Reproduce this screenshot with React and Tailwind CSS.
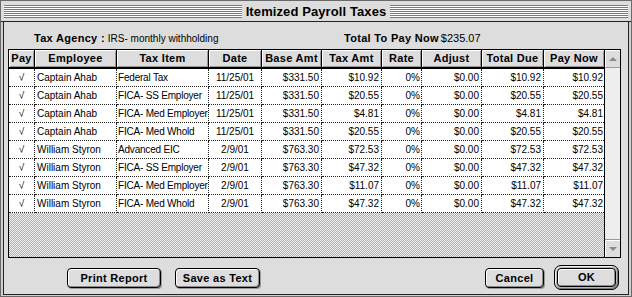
import React from "react";

const rows = [
  ["Captain Ahab", "Federal Tax", "11/25/01", "$331.50", "$10.92", "0%", "$0.00", "$10.92", "$10.92"],
  ["Captain Ahab", "FICA- SS Employer", "11/25/01", "$331.50", "$20.55", "0%", "$0.00", "$20.55", "$20.55"],
  ["Captain Ahab", "FICA- Med Employer", "11/25/01", "$331.50", "$4.81", "0%", "$0.00", "$4.81", "$4.81"],
  ["Captain Ahab", "FICA- Med Whold", "11/25/01", "$331.50", "$20.55", "0%", "$0.00", "$20.55", "$20.55"],
  ["William Styron", "Advanced EIC", "2/9/01", "$763.30", "$72.53", "0%", "$0.00", "$72.53", "$72.53"],
  ["William Styron", "FICA- SS Employer", "2/9/01", "$763.30", "$47.32", "0%", "$0.00", "$47.32", "$47.32"],
  ["William Styron", "FICA- Med Employer", "2/9/01", "$763.30", "$11.07", "0%", "$0.00", "$11.07", "$11.07"],
  ["William Styron", "FICA- Med Whold", "2/9/01", "$763.30", "$47.32", "0%", "$0.00", "$47.32", "$47.32"],
];

const headers = ["Pay", "Employee", "Tax Item", "Date", "Base Amt", "Tax Amt", "Rate", "Adjust", "Total Due", "Pay Now"];

const cellAlign = [
  "justify-center",
  "justify-start pl-[2px]",
  "justify-start pl-[1px] tracking-[-0.2px]",
  "justify-center",
  "justify-end pr-[2px]",
  "justify-end pr-[2px]",
  "justify-end pr-[1px]",
  "justify-end pr-[2px]",
  "justify-end pr-[2px]",
  "justify-end pr-[1px]",
];

function Btn({ children, w }) {
  return (
    <div
      className={`${w} h-[20px] rounded-[4px] border border-black bg-[#dddddd] flex items-center justify-center shadow-[inset_1px_1px_0_#ffffff,inset_-1px_-1px_0_#8a8a8a,1px_1px_0_#999999] text-[11px] font-bold tracking-[0.3px] text-black`}
    >
      {children}
    </div>
  );
}

export default function App() {
  const font = { fontFamily: '"Liberation Sans", Arial, sans-serif' };
  return (
    <div
      className="w-[632px] h-[297px] border border-[#6a6a6a] bg-[#cfcfcf] flex flex-col overflow-hidden text-black"
      style={font}
    >
      {/* Title bar */}
      <div className="h-[21px] shrink-0 border-b border-[#222222] bg-[#dddddd] px-[3px] flex items-center">
        <div className="flex-1 h-[13px] bg-[repeating-linear-gradient(to_bottom,#7a7a7a_0_1px,#ffffff_1px_2px)]" />
        <div className="px-[4px] text-[13px] font-bold leading-none tracking-[0.1px]">Itemized Payroll Taxes</div>
        <div className="flex-1 h-[13px] bg-[repeating-linear-gradient(to_bottom,#7a7a7a_0_1px,#ffffff_1px_2px)]" />
      </div>

      {/* Panel */}
      <div className="flex-1 mx-[2px] mb-[1px] border-l border-r border-b border-[#222222] bg-[#dddddd] flex flex-col">
        {/* Info line */}
        <div className="mt-[9px] h-[14px] pl-[30px] flex items-center text-[10px]">
          <div className="w-[310px] flex items-center">
            <span className="text-[11px] font-bold tracking-[0.3px]">Tax Agency :</span>
            <span className="ml-[3px]">IRS- monthly withholding</span>
          </div>
          <span className="text-[11px] font-bold tracking-[0.3px]">Total To Pay Now</span>
          <span className="ml-[2px] text-[11px]">$235.07</span>
        </div>

        {/* Table */}
        <div className="mt-[4px] ml-[4px] w-[613px] h-[209px] border border-black flex">
          <div className="w-[595px] flex flex-col">
            {/* Header */}
            <div className="grid grid-cols-[26px_82px_92px_53px_60px_60px_40px_60px_62px_60px] h-[19px] border-b-2 border-black">
              {headers.map((h, i) => (
                <div
                  key={h}
                  className={`${i < 9 ? "border-r border-black" : ""} bg-[#dddddd] shadow-[inset_1px_1px_0_#ffffff,inset_-1px_-1px_0_#999999] flex items-center justify-center text-[11px] font-bold tracking-[0.3px] whitespace-nowrap overflow-hidden`}
                >
                  {h}
                </div>
              ))}
            </div>
            {/* Rows */}
            <div className="bg-white">
              {rows.map((r, ri) => (
                <div
                  key={ri}
                  className="grid grid-cols-[26px_82px_92px_53px_60px_60px_40px_60px_62px_60px] h-[18px]"
                >
                  {["√", ...r].map((c, ci) => (
                    <div
                      key={ci}
                      className={`${ci < 9 ? "border-r" : ""} border-b border-dotted border-[#222222] flex items-center ${cellAlign[ci]} text-[10px] whitespace-nowrap overflow-hidden`}
                    >
                      {c}
                    </div>
                  ))}
                </div>
              ))}
            </div>
            <div className="flex-1 bg-[repeating-conic-gradient(#b0b0b0_0_25%,#efefef_0_50%)] bg-[length:2px_2px]" />
          </div>
          {/* Scrollbar */}
          <div className="w-[16px] border-l border-black bg-[#eeeeee] flex flex-col justify-between">
            <div className="h-[18px] border-b border-[#9a9a9a] bg-[#dddddd] shadow-[inset_1px_1px_0_#ffffff] flex items-center justify-center">
              <div className="w-0 h-0 border-l-[4px] border-r-[4px] border-b-[4px] border-l-transparent border-r-transparent border-b-[#8a8a8a]" />
            </div>
            <div className="h-[18px] border-t border-[#9a9a9a] bg-[#dddddd] shadow-[inset_1px_1px_0_#ffffff] flex items-center justify-center">
              <div className="w-0 h-0 border-l-[4px] border-r-[4px] border-t-[4px] border-l-transparent border-r-transparent border-t-[#8a8a8a]" />
            </div>
          </div>
        </div>

        {/* Buttons */}
        <div className="mt-[7px] h-[25px] flex items-start">
          <div className="mt-[3px] ml-[63px]">
            <Btn w="w-[94px]">Print Report</Btn>
          </div>
          <div className="mt-[3px] ml-[14px]">
            <Btn w="w-[85px]">Save as Text</Btn>
          </div>
          <div className="mt-[3px] ml-[225px]">
            <Btn w="w-[59px]">Cancel</Btn>
          </div>
          <div className="ml-[10px] w-[65px] h-[25px] rounded-[7px] border border-black bg-[#b8b8b8] shadow-[inset_1px_1px_0_#eeeeee,inset_-1px_-1px_0_#777777] p-[2px]">
            <div className="w-full h-full rounded-[4px] border border-black bg-[#dddddd] shadow-[inset_1px_1px_0_#ffffff,inset_-1px_-1px_0_#8a8a8a] flex items-center justify-center text-[11px] font-bold tracking-[0.3px]">
              OK
            </div>
          </div>
        </div>
      </div>
    </div>
  );
}
